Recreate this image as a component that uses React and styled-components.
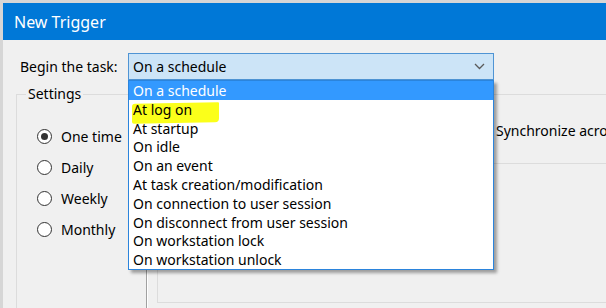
import React from "react";
import styled, { createGlobalStyle } from "styled-components";

const GlobalStyle = createGlobalStyle`
  html, body {
    margin: 0;
    padding: 0;
    background: #d4d4d4;
  }
  body {
    font-family: "Noto Sans", "Open Sans", sans-serif;
  }
`;

const Screen = styled.div`
  width: 606px;
  height: 308px;
  overflow: hidden;
  box-sizing: border-box;
  padding: 3px 0 0 3px;
  background: #d6d6d6;
`;

const Window = styled.div`
  display: flex;
  flex-direction: column;
  height: 100%;
  background: #f0f0f0;
`;

const TitleBar = styled.div`
  height: 37px;
  flex: none;
  display: flex;
  align-items: center;
  padding-left: 11px;
  background: #0078d7;
  color: #ffffff;
  font-size: 16px;
`;

const Body = styled.div`
  flex: 1;
  padding: 13px 0 0 13px;
  font-size: 14px;
  color: #000;
`;

const TaskRow = styled.div`
  display: flex;
  align-items: center;
  padding-left: 4px;
  position: relative;
  z-index: 2;
`;

const TaskLabel = styled.span`
  width: 108px;
  flex: none;
`;

const ComboWrap = styled.div`
  position: relative;
  width: 366px;
`;

const Combo = styled.div`
  box-sizing: border-box;
  height: 27px;
  display: flex;
  align-items: center;
  justify-content: space-between;
  padding: 0 8px 0 4px;
  background: #cce4f7;
  border: 1px solid #4f94d4;
`;

const Dropdown = styled.ul`
  position: absolute;
  top: 100%;
  left: 0;
  right: 0;
  margin: 0;
  padding: 0;
  list-style: none;
  background: #ffffff;
  border: 1px solid #2b84dc;
  box-shadow: 3px 3px 3px rgba(0, 0, 0, 0.35);
`;

const Item = styled.li`
  position: relative;
  height: 18.8px;
  line-height: 19.4px;
  padding-left: 4px;
  white-space: nowrap;
  background: ${(p) => (p.$selected ? "#3399ff" : "transparent")};
  color: ${(p) => (p.$selected ? "#ffffff" : "#000000")};
`;

const ItemText = styled.span`
  position: relative;
  z-index: 1;
`;

const Highlight = styled.span`
  position: absolute;
  left: 3px;
  top: 3px;
  width: 87px;
  height: 20px;
  background: #fbff1a;
  border-radius: 3px 1px 4px 2px;
  transform: skewY(-1deg);
`;

const Group = styled.fieldset`
  margin: 5px 0 0 0;
  padding: 0;
  width: 640px;
  height: 260px;
  border: 1px solid #dcdcdc;
  border-right: none;
  box-sizing: border-box;
`;

const Legend = styled.legend`
  margin-left: 9px;
  padding: 0 2px;
  line-height: 18px;
`;

const GroupContent = styled.div`
  display: flex;
  padding-top: 15px;
`;

const RadioColumn = styled.div`
  box-sizing: border-box;
  width: 129px;
  flex: none;
  display: flex;
  flex-direction: column;
  gap: 11px;
  padding: 8px 0 0 20px;
`;

const RadioRow = styled.label`
  display: flex;
  align-items: center;
  gap: 9px;
  height: 20px;
`;

const RadioCircle = styled.span`
  box-sizing: border-box;
  width: 15px;
  height: 15px;
  border-radius: 50%;
  border: 1px solid #333333;
  background: #ffffff;
  display: flex;
  align-items: center;
  justify-content: center;
  &::after {
    content: "";
    width: 7px;
    height: 7px;
    border-radius: 50%;
    background: ${(p) => (p.$checked ? "#333333" : "transparent")};
  }
`;

const Divider = styled.div`
  width: 1px;
  height: 220px;
  flex: none;
  background: #a0a0a0;
  border-right: 1px solid #ffffff;
`;

const RightPanel = styled.div`
  flex: 1;
  display: flex;
  flex-direction: column;
  padding-left: 9px;
`;

const StartRow = styled.div`
  display: flex;
  align-items: center;
  gap: 8px;
  height: 24px;
  padding-left: 318px;
  white-space: nowrap;
`;

const Check = styled.span`
  box-sizing: border-box;
  width: 13px;
  height: 13px;
  border: 1px solid #333333;
  background: #ffffff;
`;

const InnerBox = styled.div`
  margin-top: 21px;
  height: 138px;
  border: 1px solid #dcdcdc;
  border-right: none;
`;

const options = [
  "On a schedule",
  "At log on",
  "At startup",
  "On idle",
  "On an event",
  "At task creation/modification",
  "On connection to user session",
  "On disconnect from user session",
  "On workstation lock",
  "On workstation unlock",
];

const radios = ["One time", "Daily", "Weekly", "Monthly"];

export default function App() {
  return (
    <Screen>
      <GlobalStyle />
      <Window>
        <TitleBar>New Trigger</TitleBar>
        <Body>
          <TaskRow>
            <TaskLabel>Begin the task:</TaskLabel>
            <ComboWrap>
              <Combo>
                <span>On a schedule</span>
                <svg width="11" height="7" viewBox="0 0 11 7">
                  <path d="M1 1 L5.5 5.5 L10 1" fill="none" stroke="#5a5a5a" strokeWidth="1.3" />
                </svg>
              </Combo>
              <Dropdown>
                {options.map((o, i) => (
                  <Item key={o} $selected={i === 0}>
                    {i === 1 && <Highlight />}
                    <ItemText>{o}</ItemText>
                  </Item>
                ))}
              </Dropdown>
            </ComboWrap>
          </TaskRow>
          <Group>
            <Legend>Settings</Legend>
            <GroupContent>
              <RadioColumn>
                {radios.map((r, i) => (
                  <RadioRow key={r}>
                    <RadioCircle $checked={i === 0} />
                    {r}
                  </RadioRow>
                ))}
              </RadioColumn>
              <Divider />
              <RightPanel>
                <StartRow>
                  <Check />
                  <span>Synchronize across time zones</span>
                </StartRow>
                <InnerBox />
              </RightPanel>
            </GroupContent>
          </Group>
        </Body>
      </Window>
    </Screen>
  );
}
